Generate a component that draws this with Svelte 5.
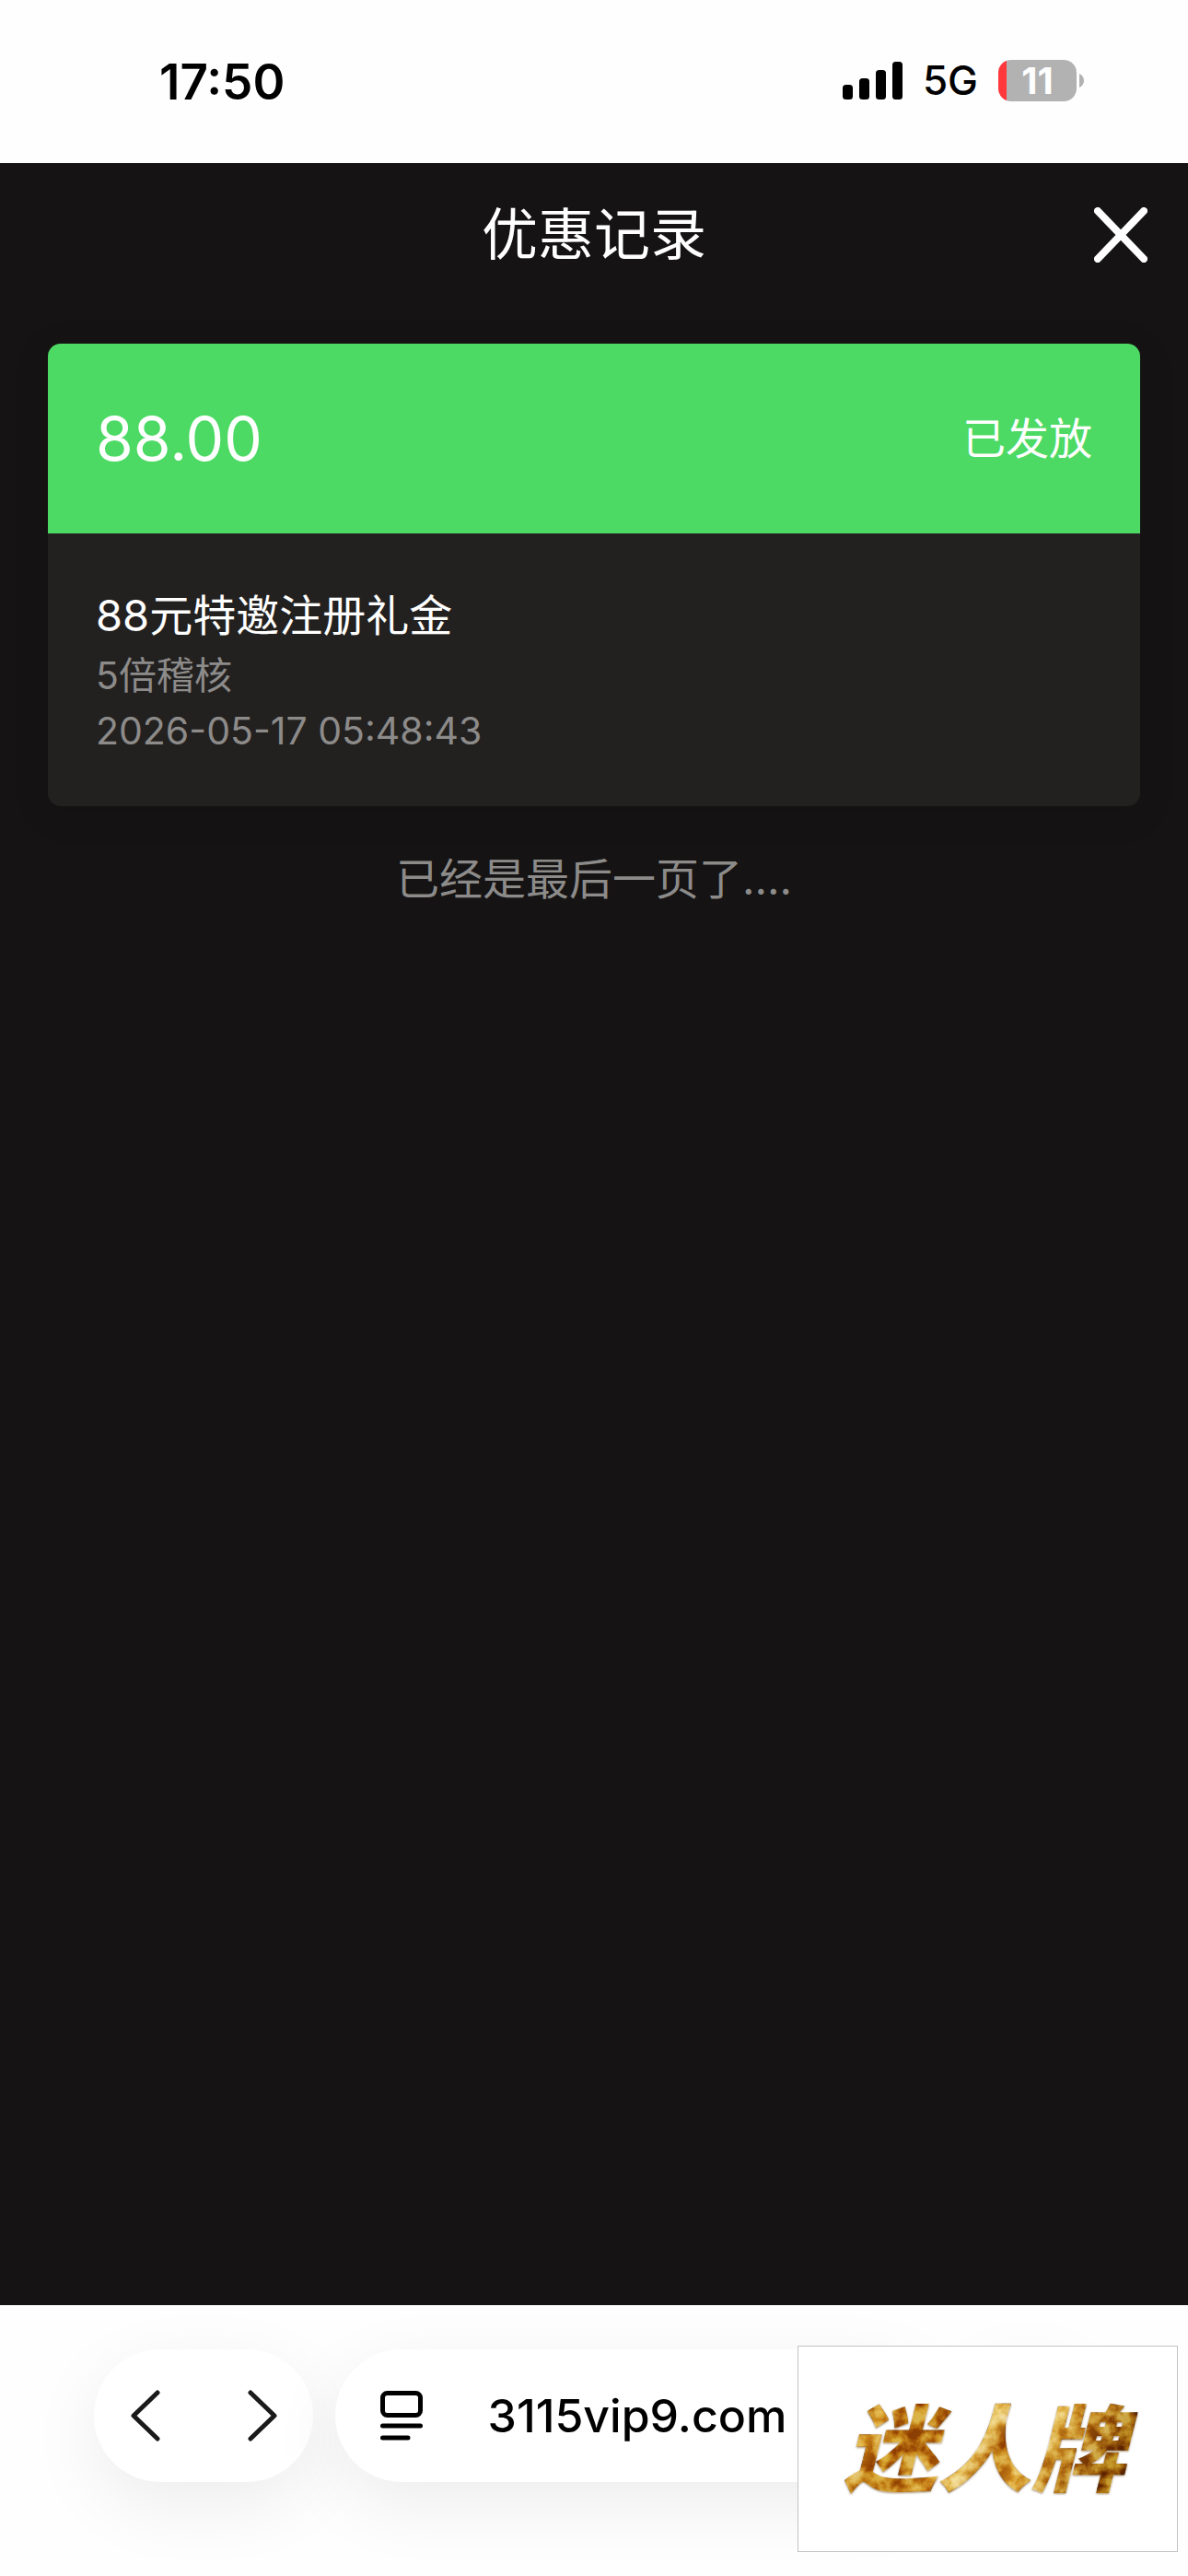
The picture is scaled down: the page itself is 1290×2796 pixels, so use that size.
<script lang="ts">
interface PromoRecord {
  amount: string
  status: string
  title: string
  audit: string
  time: string
}

const records: PromoRecord[] = [
  {
    amount: '88.00',
    status: '已发放',
    title: '88元特邀注册礼金',
    audit: '5倍稽核',
    time: '2026-05-17 05:48:43'
  }
]

const battery = 11
</script>

<div class="screen">
  <div class="status-bar">
    <span class="clock">17:50</span>
    <div class="indicators">
      <svg class="signal" viewBox="0 0 65 41" aria-hidden="true">
        <rect x="0" y="25" width="11" height="16" rx="3.5" />
        <rect x="18" y="18" width="11" height="23" rx="3.5" />
        <rect x="36" y="9" width="11" height="32" rx="3.5" />
        <rect x="54" y="0" width="11" height="41" rx="3.5" />
      </svg>
      <span class="network">5G</span>
      <div class="battery">
        <span class="cell" style:--level="{battery}%">{battery}</span>
        <svg class="tip" viewBox="0 0 5 15" aria-hidden="true">
          <path d="M0 0C3 1.500 5 4 5 7.500S3 13.500 0 15Z" />
        </svg>
      </div>
    </div>
  </div>

  <main>
    <header>
      <h1>优惠记录</h1>
      <button class="close" aria-label="关闭">
        <svg viewBox="0 0 58 60" aria-hidden="true">
          <path d="M4 4L54 56M54 4L4 56" />
        </svg>
      </button>
    </header>

    <section class="records">
      {#each records as record}
        <article class="card">
          <div class="card-head">
            <span class="amount">{record.amount}</span>
            <span class="state">{record.status}</span>
          </div>
          <div class="card-body">
            <h2>{record.title}</h2>
            <p>{record.audit}</p>
            <p>{record.time}</p>
          </div>
        </article>
      {/each}
      <p class="end">已经是最后一页了....</p>
    </section>
  </main>

  <nav class="browser-bar">
    <div class="pill history">
      <button aria-label="后退">
        <svg class="chevron" viewBox="0 0 32 56" aria-hidden="true">
          <path d="M29 3L3 28L29 53" />
        </svg>
      </button>
      <button aria-label="前进">
        <svg class="chevron" viewBox="0 0 32 56" aria-hidden="true">
          <path d="M3 3L29 28L3 53" />
        </svg>
      </button>
    </div>
    <div class="pill address">
      <button class="page-menu" aria-label="页面菜单">
        <svg viewBox="0 0 46 54" aria-hidden="true">
          <rect x="2.500" y="2.500" width="41" height="24" rx="5" />
          <path d="M2.500 38H43.500M2.500 51H30" />
        </svg>
      </button>
      <a href="https://3115vip9.com">3115vip9.com</a>
    </div>
    <button class="pill more" aria-label="更多"></button>
  </nav>

  <div class="brand">
    <svg viewBox="0 0 411 222" role="img" aria-label="迷人牌">
      <defs>
        <linearGradient id="gold" x1="0" y1="0" x2="1" y2="0.300">
          <stop offset="0" stop-color="#a06c14" />
          <stop offset="0.120" stop-color="#be8724" />
          <stop offset="0.200" stop-color="#e2b854" />
          <stop offset="0.280" stop-color="#b87814" />
          <stop offset="0.380" stop-color="#bf8420" />
          <stop offset="0.480" stop-color="#cb9028" />
          <stop offset="0.560" stop-color="#ecd080" />
          <stop offset="0.640" stop-color="#bd7e18" />
          <stop offset="0.740" stop-color="#e4bc5c" />
          <stop offset="0.860" stop-color="#c4902f" />
          <stop offset="1" stop-color="#955f0e" />
        </linearGradient>
        <!-- crumpled foil over the gradient -->
        <filter id="foil" x="-5%" y="-5%" width="110%" height="110%" color-interpolation-filters="sRGB">
          <feTurbulence type="fractalNoise" baseFrequency="0.060" numOctaves="5" seed="8" result="noise" />
          <feColorMatrix
            in="noise"
            type="matrix"
            values="2.400 0 0 0 -0.650  2.400 0 0 0 -0.720  2.400 0 0 0 -0.800  0 0 0 0 1"
            result="grain" />
          <feBlend in="grain" in2="SourceGraphic" mode="soft-light" result="mixed" />
          <feComposite in="mixed" in2="SourceAlpha" operator="in" result="face" />
          <feDropShadow in="face" dx="0" dy="1" stdDeviation="1" flood-color="#6b430b" flood-opacity="0.600" />
        </filter>
      </defs>
      <text x="202" y="149" text-anchor="middle" fill="url(#gold)" filter="url(#foil)">迷人牌</text>
    </svg>
  </div>
</div>

<style>
  :global(body) {
    background: #fdfdfd;
  }

  .screen {
    position: relative;
    min-height: 100vh;
    display: flex;
    flex-direction: column;
    font-family: Inter, "Noto Sans CJK SC", sans-serif;
    color: #000;
  }

  h1,
  h2,
  p {
    margin: 0;
    font-weight: 400;
  }

  button {
    padding: 0;
    border: 0;
    background: none;
    display: flex;
    align-items: center;
    justify-content: center;
    cursor: pointer;
  }

  svg {
    display: block;
  }

  .status-bar {
    height: 177px;
    padding: 0 113px 0 173px;
    box-sizing: border-box;
    display: flex;
    align-items: center;
    justify-content: space-between;
    background: #fefefe;
  }

  .clock {
    font-size: 53px;
    font-weight: 600;
  }

  .indicators {
    display: flex;
    align-items: center;
    gap: 22px;
    padding-bottom: 3px;
  }

  .signal {
    width: 65px;
    height: 41px;
  }

  .network {
    font-size: 44px;
    font-weight: 500;
  }

  .battery {
    display: flex;
    align-items: center;
    gap: 3px;
  }

  .cell {
    width: 85px;
    border-radius: 14px;
    background: linear-gradient(to right, #ff383c var(--level), #b2b2b2 var(--level));
    color: #fff;
    font-size: 40px;
    font-weight: 700;
    line-height: 45px;
    text-align: center;
  }

  .tip {
    width: 5px;
    height: 15px;
    fill: #b2b2b2;
  }

  main {
    flex: 1;
    background: #151313;
    color: #fff;
  }

  header {
    height: 156px;
    padding: 0 44px;
    display: grid;
    grid-template-columns: 1fr auto 1fr;
    align-items: center;
  }

  h1 {
    grid-column: 2;
    font-size: 61px;
    line-height: 84px;
  }

  .close {
    justify-self: end;
  }

  .close svg {
    width: 58px;
    height: 60px;
    stroke: #fff;
    stroke-width: 8;
    stroke-linecap: round;
  }

  .records {
    padding: 40px 52px;
  }

  .card {
    border-radius: 14px;
    overflow: hidden;
    background: #232120;
    box-shadow: 0 8px 40px rgba(0, 0, 0, 0.1);
  }

  .card-head {
    height: 206px;
    padding: 0 52px;
    box-sizing: border-box;
    display: flex;
    align-items: center;
    justify-content: space-between;
    background: #4cda64;
  }

  .amount {
    font-size: 66px;
  }

  .state {
    font-size: 47px;
    line-height: 70px;
  }

  .card-body {
    padding: 54px 52px 52px;
  }

  h2 {
    font-size: 47px;
    line-height: 70px;
  }

  .card-body p {
    font-size: 41px;
    line-height: 60px;
    color: #8c8b8a;
  }

  .end {
    margin-top: 44px;
    font-size: 47px;
    line-height: 70px;
    text-align: center;
    color: #8c8b8a;
  }

  .browser-bar {
    height: 294px;
    padding: 48px 102px 0;
    box-sizing: border-box;
    display: flex;
    gap: 24px;
    background: #fefefe;
    overflow: hidden;
  }

  .pill {
    height: 144px;
    box-sizing: border-box;
    border-radius: 72px;
    background: #fff;
    box-shadow: 0 24px 80px rgba(0, 0, 0, 0.07);
  }

  .history {
    width: 238px;
    display: flex;
  }

  .history button {
    flex: 1;
  }

  .history button:first-child {
    padding-right: 8px;
  }

  .history button:last-child {
    padding-left: 8px;
  }

  .chevron {
    width: 32px;
    height: 56px;
    fill: none;
    stroke: #1a1a1a;
    stroke-width: 5;
    stroke-linecap: round;
    stroke-linejoin: round;
  }

  .address {
    flex: 1;
    display: grid;
    grid-template-columns: 46px 1fr 46px;
    align-items: center;
    padding: 0 49px;
  }

  .page-menu svg {
    width: 46px;
    height: 54px;
    fill: none;
    stroke: #000;
    stroke-width: 5;
    stroke-linecap: round;
  }

  .address a {
    color: #000;
    font-size: 50px;
    font-weight: 500;
    text-align: center;
    text-decoration: none;
  }

  .more {
    width: 144px;
  }

  .brand {
    position: absolute;
    right: 11px;
    bottom: 26px;
    width: 413px;
    height: 224px;
    box-sizing: border-box;
    border: 1px solid #c4c4c4;
    background: #fff;
  }

  .brand text {
    font-family: "Noto Sans CJK SC", sans-serif;
    font-size: 102px;
    font-weight: 900;
    font-style: italic;
  }
</style>
